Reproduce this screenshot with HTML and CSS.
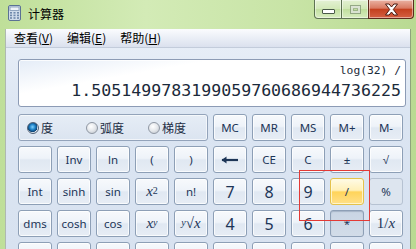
FILE: index.html
```html
<!DOCTYPE html>
<html lang="zh-CN">
<head>
    <meta charset="UTF-8">
    <title>计算器</title>
    <link rel="stylesheet" href="styles.css">
</head>
<body>

    <div class="titlebar">
        <svg class="app-icon" width="13" height="16" viewBox="0 0 13 16">
            <rect x="0.5" y="0.5" width="12" height="15" rx="1.5" fill="#cfdbea" stroke="#5b7294"/>
            <rect x="2" y="2" width="9" height="3.5" fill="#eef3f9" stroke="#7d93b2" stroke-width="0.8"/>
            <g fill="#6f88ab">
                <rect x="2" y="7" width="2" height="1.6"/><rect x="5.5" y="7" width="2" height="1.6"/><rect x="9" y="7" width="2" height="1.6"/>
                <rect x="2" y="9.6" width="2" height="1.6"/><rect x="5.5" y="9.6" width="2" height="1.6"/><rect x="9" y="9.6" width="2" height="1.6"/>
                <rect x="2" y="12.2" width="2" height="1.6"/><rect x="5.5" y="12.2" width="2" height="1.6"/><rect x="9" y="12.2" width="2" height="1.6"/>
            </g>
        </svg>
        <span class="title">计算器</span>
        <div class="caption-buttons">
            <div class="cap cap-min"><span></span></div>
            <div class="cap cap-max"><span></span></div>
            <div class="cap cap-close">
                <svg class="close-x" width="17" height="13" viewBox="0 0 17 13">
                    <path d="M2.5 1h3.6l2.4 3 2.4-3h3.6l-4.2 5.5 4.2 5.5h-3.6l-2.4-3-2.4 3h-3.6l4.2-5.5z" fill="#ffffff" stroke="#4a1a10" stroke-width="1" stroke-linejoin="round"/>
                </svg>
            </div>
        </div>
    </div>

    <div class="client">
        <div class="menubar">
            <span class="menu-item">查看(<u>V</u>)</span>
            <span class="menu-item">编辑(<u>E</u>)</span>
            <span class="menu-item">帮助(<u>H</u>)</span>
        </div>

        <div class="calc">
            <div class="display">
                <div class="expr">log(32) /</div>
                <div class="value">1.5051499783199059760686944736225</div>
            </div>

            <div class="keys">
                <div class="angle-group">
                    <label class="radio-item"><span class="radio checked"></span>度</label>
                    <label class="radio-item wide"><span class="radio"></span>弧度</label>
                    <label class="radio-item"><span class="radio"></span>梯度</label>
                </div>
                <button>MC</button>
                <button>MR</button>
                <button>MS</button>
                <button>M+</button>
                <button>M-</button>

                <button></button>
                <button>Inv</button>
                <button>ln</button>
                <button>(</button>
                <button>)</button>
                <button>
                    <svg width="18" height="8" viewBox="0 0 18 8"><path d="M1 4h16" stroke="#1d3557" stroke-width="2.2"/><path d="M0.5 4l5-3.5v7z" fill="#1d3557"/></svg>
                </button>
                <button>CE</button>
                <button>C</button>
                <button>±</button>
                <button>√</button>

                <button>Int</button>
                <button>sinh</button>
                <button>sin</button>
                <button class="math"><i>x</i><sup>2</sup></button>
                <button>n!</button>
                <button class="digit">7</button>
                <button class="digit">8</button>
                <button class="digit">9</button>
                <button class="hot">/</button>
                <button class="disabled">%</button>

                <button>dms</button>
                <button>cosh</button>
                <button>cos</button>
                <button class="math"><i>x</i><sup><i>y</i></sup></button>
                <button class="math"><sup><i>y</i></sup>√<i>x</i></button>
                <button class="digit">4</button>
                <button class="digit">5</button>
                <button class="digit">6</button>
                <button class="pressed">*</button>
                <button class="math">1/<i>x</i></button>

                <!-- next row, only its top edge shows -->
                <button></button>
                <button></button>
                <button></button>
                <button></button>
                <button></button>
                <button></button>
                <button></button>
                <button></button>
                <button></button>
                <button></button>
            </div>
        </div>
    </div>

    <div class="highlight"></div>

</body>
</html>
```

FILE: styles.css
```css
body {
    margin: 0;
    width: 416px;
    height: 249px;
    overflow: hidden;
    position: relative;
    background: linear-gradient(90deg, #bfdf99 0%, #d3ebb6 35%, #c8e4a6 70%, #b9da92 100%);
    font-family: "Noto Sans", "Noto Sans CJK SC", sans-serif;
    color: #000;
}
.titlebar {
    height: 29px;
    display: flex;
    align-items: flex-start;
}
.app-icon {
    margin: 5px 0 0 8px;
}
.title {
    margin: 5px 0 0 7px;
    font-family: "Noto Sans CJK SC", sans-serif;
    font-size: 12px;
    line-height: 17px;
}
.caption-buttons {
    margin-left: auto;
    margin-right: 2px;
    display: flex;
    height: 19px;
}
.cap {
    height: 18px;
    border: 1px solid rgba(52, 72, 44, 0.75);
    border-top: none;
    display: flex;
    align-items: center;
    justify-content: center;
    box-shadow: inset 0 0 0 1px rgba(255, 255, 255, 0.45);
}
.cap-min, .cap-max {
    width: 26px;
    background: linear-gradient(rgba(255, 255, 255, 0.55), rgba(255, 255, 255, 0.25) 50%, rgba(190, 220, 160, 0.35) 51%, rgba(230, 245, 215, 0.6));
}
.cap-min {
    border-bottom-left-radius: 4px;
    border-right: none;
}
.cap-min span {
    width: 11px;
    height: 3px;
    margin-top: 4px;
    background: #fff;
    border: 1px solid #4a5a48;
    border-radius: 1px;
}
.cap-max {
    border-right: none;
}
.cap-max span {
    width: 9px;
    height: 7px;
    border: 1px solid rgba(120, 140, 110, 0.7);
    box-shadow: inset 0 0 0 2px rgba(255, 255, 255, 0.6), inset 0 0 0 3px rgba(120, 140, 110, 0.5);
}
.cap-close {
    width: 44px;
    border-bottom-right-radius: 4px;
    background: linear-gradient(#eab3a3, #d97a62 45%, #c4401f 52%, #d46042);
    border-color: #5c2a1c;
}
.close-x {
    display: block;
    flex-shrink: 0;
}
.client {
    margin-left: 5px;
    width: 404px;
    height: 220px;
    border-left: 1px solid #aeb9b0;
    border-right: 1px solid #8ea37c;
    background: linear-gradient(#e9eff8, #dbe5f2 40%, #d8e2f0);
}
.menubar {
    height: 18px;
    display: flex;
    align-items: center;
    padding-left: 1px;
    background: linear-gradient(#fbfcfe, #eaeef6 50%, #dbe1ee);
    border-bottom: 1px solid #c3ccdb;
    font-family: "Noto Sans CJK SC", sans-serif;
    font-size: 12px;
}
.menu-item {
    padding: 0 7px;
    line-height: 18px;
}
.menu-item u {
    text-underline-offset: 1px;
}
.calc {
    padding: 11px 0 0 12px;
}
.display {
    width: 382px;
    height: 46px;
    border: 1px solid #8c9bb5;
    border-radius: 3px;
    background: linear-gradient(170deg, #e4ecf7 0%, #ffffff 30%, #ffffff 100%);
    box-shadow: inset 0 0 0 1px rgba(255, 255, 255, 0.8);
    text-align: right;
    padding-right: 4px;
    color: #1b2a3a;
    font-family: "DejaVu Sans Mono", monospace;
}
.expr {
    font-size: 11.3px;
    line-height: 14px;
    margin-top: 4px;
}
.value {
    font-size: 16.6px;
    line-height: 22px;
    margin-top: 2px;
}
.keys {
    margin-top: 7px;
    display: grid;
    grid-template-columns: repeat(10, 34px);
    grid-auto-rows: 27px;
    gap: 5px;
}
.angle-group {
    grid-column: span 5;
    display: flex;
    align-items: center;
    padding-left: 8px;
    border: 1px solid #93a3ba;
    border-radius: 3px;
    background: linear-gradient(#e6edf6, #dbe4f0);
    box-shadow: inset 0 0 0 1px rgba(255, 255, 255, 0.6);
    font-family: "Noto Sans CJK SC", sans-serif;
    font-size: 12px;
    color: #1d2d44;
}
.radio-item {
    display: flex;
    align-items: center;
    width: 64px;
}
.radio-item.wide {
    width: 67px;
}
.radio {
    width: 10px;
    height: 10px;
    margin-right: 2px;
    border-radius: 50%;
    border: 1px solid #8f97a3;
    background: radial-gradient(circle at 40% 35%, #ffffff 0%, #e4e7eb 50%, #b9bfc7 100%);
}
.radio.checked {
    background: radial-gradient(circle at 45% 40%, #7fd2ff 0%, #1d7fc4 35%, #0d3f6e 60%, #dfe6ee 62%, #c3cad3 100%);
    border-color: #4f6176;
}
.keys button {
    margin: 0;
    padding: 0;
    border: 1px solid #8d9fb6;
    border-radius: 3px;
    background: linear-gradient(#f7f9fc 0%, #eef3f9 45%, #e0e8f2 52%, #e7edf5 100%);
    box-shadow: inset 0 0 0 1px rgba(255, 255, 255, 0.75);
    color: #1d3557;
    font-family: "Noto Sans", sans-serif;
    font-size: 11.5px;
    display: flex;
    align-items: center;
    justify-content: center;
}
.keys button.digit {
    font-size: 16px;
}
.keys button.math {
    font-family: "Liberation Serif", serif;
    font-size: 15px;
}
.keys button.math sup {
    font-size: 10px;
    line-height: 0;
    position: relative;
    top: -1px;
}
.keys button.hot {
    border-color: #e4c24c;
    background: linear-gradient(#fffbe6 0%, #fff0b8 45%, #ffd45a 52%, #ffe089 100%);
    box-shadow: inset 0 0 0 1px rgba(255, 250, 220, 0.8);
}
.keys button.disabled {
    border-color: #b6c2d2;
    background: #dde5ef;
    box-shadow: none;
}
.keys button.pressed {
    background: linear-gradient(#c9d5e4, #d2dce8);
    box-shadow: inset 0 1px 1px rgba(60, 80, 110, 0.25);
}
.highlight {
    position: absolute;
    left: 299px;
    top: 170px;
    width: 69px;
    height: 49px;
    border: 1px solid #e33a36;
}
```
